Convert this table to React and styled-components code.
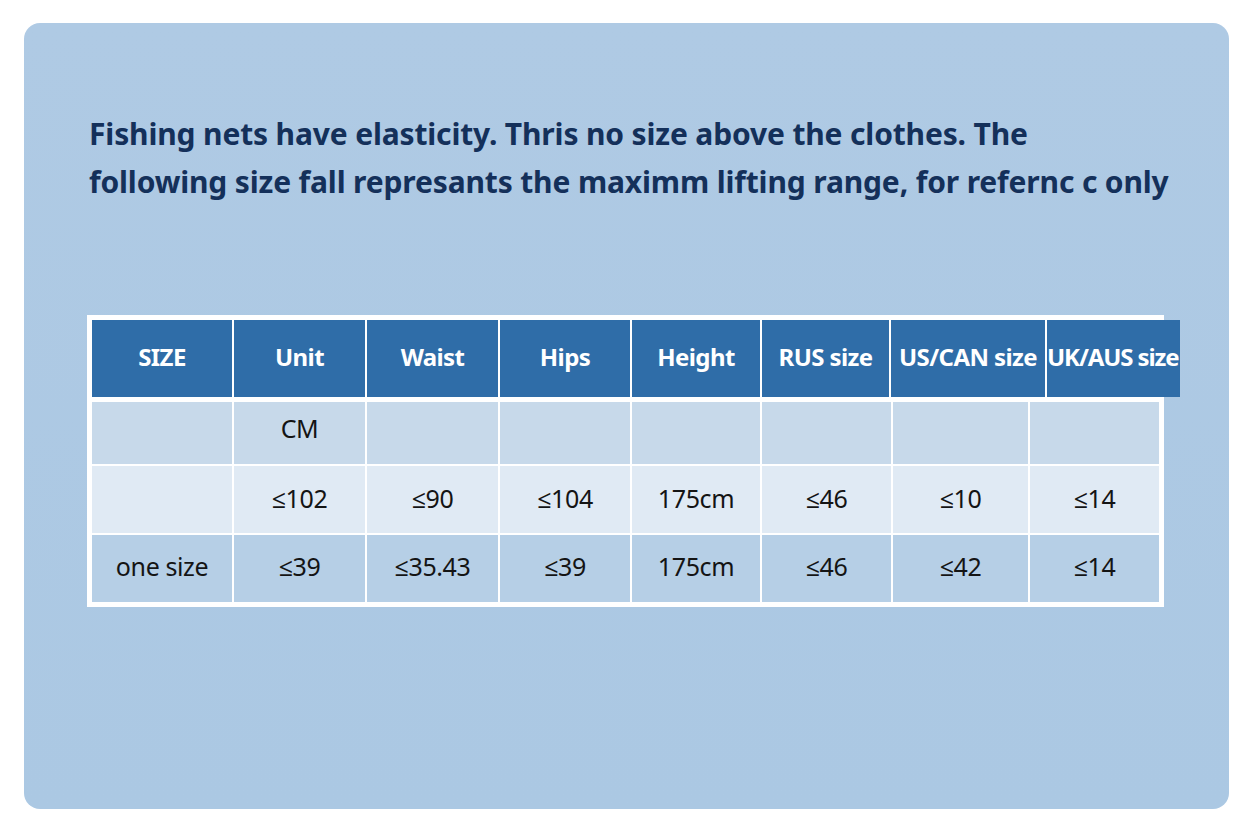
import styled, { createGlobalStyle } from 'styled-components';

const GlobalStyle = createGlobalStyle`
    html, body {
        margin: 0;
        padding: 0;
        background: #ffffff;
    }
    body {
        font-family: "Noto Sans", "Open Sans", sans-serif;
    }
`;

const Page = styled.div`
    width: 1248px;
    height: 832px;
    padding: 23px 19px 23px 24px;
    box-sizing: border-box;
`;

const Card = styled.div`
    width: 100%;
    height: 100%;
    box-sizing: border-box;
    border-radius: 16px;
    background: linear-gradient(180deg, #afcae4 0%, #abc8e3 100%);
    padding: 87px 0 0 63px;
    display: flex;
    flex-direction: column;
    gap: 109px;
`;

const Title = styled.h1`
    margin: 0 0 0 2px;
    font-size: 30px;
    line-height: 48px;
    font-weight: 700;
    color: #14305a;
    letter-spacing: -0.15px;
    white-space: nowrap;
`;

const Frame = styled.div`
    width: 1077px;
    box-sizing: border-box;
    border: 5px solid #ffffff;
    background: #ffffff;
    display: flex;
    flex-direction: column;
    gap: 5px;
`;

const Grid = styled.div`
    display: grid;
    grid-template-columns: ${(p) => p.$cols};
    column-gap: 2px;
    width: max-content;
`;

const HeadCell = styled.div`
    height: 77px;
    padding-bottom: 5px;
    box-sizing: border-box;
    background: #2f6da8;
    color: #ffffff;
    font-size: 24px;
    font-weight: 700;
    letter-spacing: ${(p) => (p.$tight ? '-1.1px' : '-0.6px')};
    display: flex;
    align-items: center;
    justify-content: ${(p) => (p.$tight ? 'flex-start' : 'center')};
    white-space: nowrap;
`;

const Row = styled(Grid)`
    margin-top: ${(p) => (p.$first ? '0' : '2px')};
`;

const Cell = styled.div`
    height: ${(p) => p.$h}px;
    background: ${(p) => p.$bg};
    color: #141414;
    font-size: 25px;
    letter-spacing: -0.4px;
    display: flex;
    align-items: center;
    justify-content: center;
    padding-bottom: ${(p) => p.$lift || 0}px;
    box-sizing: border-box;
    white-space: nowrap;
`;

const headCols = '140px 131px 131px 130px 128px 127px 154px 133px';
const bodyCols = '140px 131px 131px 130px 128px 129px 135px 129px';

const headers = ['SIZE', 'Unit', 'Waist', 'Hips', 'Height', 'RUS size', 'US/CAN size', 'UK/AUS size'];

const rows = [
    { h: 62, bg: '#c7d9ea', lift: 10, cells: ['', 'CM', '', '', '', '', '', ''] },
    { h: 67, bg: '#e0eaf4', lift: 3, cells: ['', '≤102', '≤90', '≤104', '175cm', '≤46', '≤10', '≤14'] },
    { h: 67, bg: '#b6cfe6', lift: 5, cells: ['one size', '≤39', '≤35.43', '≤39', '175cm', '≤46', '≤42', '≤14'] },
];

const App = () => {
    return (
        <Page>
            <GlobalStyle />
            <Card>
                <Title>
                    Fishing nets have elasticity. Thris no size above the clothes. The
                    <br />
                    following size fall represants the maximm lifting range, for refernc c only
                </Title>

                <Frame>
                    <Grid $cols={headCols}>
                        {headers.map((h, i) => (
                            <HeadCell key={h} $tight={i === headers.length - 1}>
                                {h}
                            </HeadCell>
                        ))}
                    </Grid>
                    <div>
                        {rows.map((r, ri) => (
                            <Row key={ri} $cols={bodyCols} $first={ri === 0}>
                                {r.cells.map((c, ci) => (
                                    <Cell key={ci} $h={r.h} $bg={r.bg} $lift={r.lift}>
                                        {c}
                                    </Cell>
                                ))}
                            </Row>
                        ))}
                    </div>
                </Frame>
            </Card>
        </Page>
    );
};

export default App;
